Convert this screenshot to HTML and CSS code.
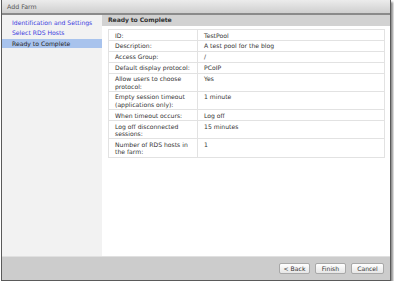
FILE: index.html
```html
<!DOCTYPE html>
<html>
<head>
<meta charset="utf-8">
<link rel="stylesheet" href="styles.css">
</head>
<body>
<div class="dialog">
  <div class="titlebar">Add Farm</div>
  <div class="main">
    <nav class="nav">
      <div class="nav-item link">Identification and Settings</div>
      <div class="nav-item link">Select RDS Hosts</div>
      <div class="nav-item selected">Ready to Complete</div>
    </nav>
    <section class="content">
      <div class="header">Ready to Complete</div>
      <div class="body">
        <table class="summary">
          <tr><td class="k">ID:</td><td>TestPool</td></tr>
          <tr><td class="k">Description:</td><td>A test pool for the blog</td></tr>
          <tr><td class="k">Access Group:</td><td>/</td></tr>
          <tr><td class="k">Default display protocol:</td><td>PCoIP</td></tr>
          <tr><td class="k">Allow users to choose<br>protocol:</td><td>Yes</td></tr>
          <tr><td class="k">Empty session timeout<br>(applications only):</td><td>1 minute</td></tr>
          <tr><td class="k">When timeout occurs:</td><td>Log off</td></tr>
          <tr><td class="k">Log off disconnected<br>sessions:</td><td>15 minutes</td></tr>
          <tr><td class="k">Number of RDS hosts in<br>the farm:</td><td>1</td></tr>
        </table>
      </div>
    </section>
  </div>
  <div class="footer">
    <button class="btn back">&lt; Back</button>
    <button class="btn finish">Finish</button>
    <button class="btn cancel">Cancel</button>
  </div>
</div>
</body>
</html>
```
FILE: styles.css
```css
html, body {
  margin: 0;
  padding: 0;
  background: #ffffff;
}
body {
  font-family: "DejaVu Sans", Verdana, sans-serif;
  font-size: 6.1px;
  color: #333;
}
.dialog {
  width: 388px;
  height: 280px;
  margin-left: 1px;
  border: 1px solid #5a5a5a;
  border-top: none;
  box-shadow: 2px 2px 2px rgba(0,0,0,0.45);
  display: flex;
  flex-direction: column;
  background: #fff;
}
.titlebar {
  height: 13px;
  line-height: 13px;
  padding-left: 5px;
  background: linear-gradient(#ececec, #cfcfcf);
  border-bottom: 2px solid #8a8a8a;
  color: #555;
  font-size: 6.3px;
}
.main {
  flex: 1;
  display: flex;
  min-height: 0;
}
.nav {
  width: 100px;
  background: #f2f2f2;
  padding-top: 3px;
}
.nav-item {
  height: 10px;
  line-height: 10px;
  padding-left: 10px;
  white-space: nowrap;
}
.nav-item.link {
  color: #3a3adf;
}
.nav-item.selected {
  background: #a8c3ed;
  color: #222;
  height: 9px;
  line-height: 9px;
  margin-top: 1px;
}
.content {
  flex: 1;
  display: flex;
  flex-direction: column;
}
.header {
  height: 11px;
  line-height: 10px;
  background: #d2d2d2;
  padding-left: 6px;
  color: #333;
  font-weight: bold;
  letter-spacing: -0.1px;
}
.body {
  padding: 3px 5px 0 6px;
}
.summary {
  width: 100%;
  border-collapse: collapse;
  border: 1px solid #c8c8c8;
}
.summary td {
  border: 1px solid #e2e2e2;
  padding: 1.5px 6px 1px 6px;
  line-height: 7.4px;
  vertical-align: top;
  color: #333;
}
.summary td.k {
  width: 76px;
}
.footer {
  height: 24px;
  background: #cccccc;
  border-top: 1px solid #e0e0e0;
  display: flex;
  justify-content: flex-end;
  align-items: center;
  gap: 5px;
  padding-right: 6px;
  box-sizing: border-box;
}
.btn {
  font-family: "DejaVu Sans", Verdana, sans-serif;
  font-size: 6.1px;
  color: #333;
  height: 11px;
  padding: 0;
  background: linear-gradient(#ffffff, #e6e6e6);
  border: 1px solid #a8a8a8;
  border-radius: 2px;
  line-height: 9px;
}
.btn.back { width: 31px; }
.btn.finish { width: 31px; }
.btn.cancel { width: 33px; }
```
